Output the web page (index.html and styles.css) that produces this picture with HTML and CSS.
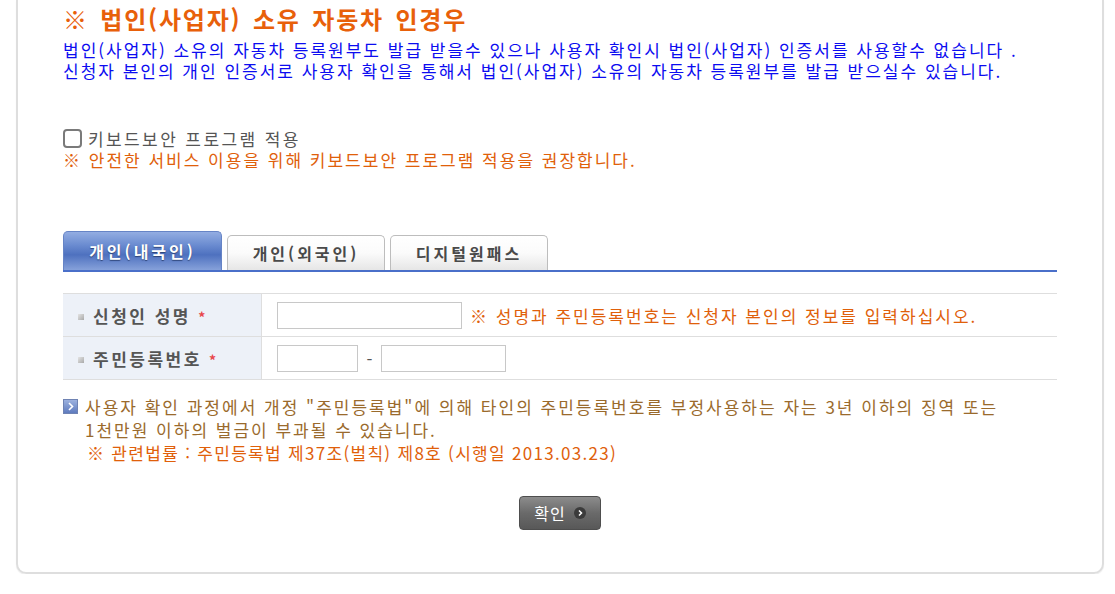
FILE: index.html
```html
<!DOCTYPE html>
<html lang="ko">
<head>
<meta charset="utf-8">
<title>법인(사업자) 소유 자동차 인경우</title>
<link rel="stylesheet" href="styles.css">
</head>
<body>
<div class="box">
  <h2 class="title">※ 법인(사업자) 소유 자동차 인경우</h2>
  <p class="desc">법인(사업자) 소유의 자동차 등록원부도 발급 받을수 있으나 사용자 확인시 법인(사업자) 인증서를 사용할수 없습니다 .<br>신청자 본인의 개인 인증서로 사용자 확인을 통해서 법인(사업자) 소유의 자동차 등록원부를 발급 받으실수 있습니다.</p>

  <div class="keysec">
    <label class="chk"><input type="checkbox" class="cbox">키보드보안 프로그램 적용</label>
    <p class="warn"><span class="mark">※</span> 안전한 서비스 이용을 위해 키보드보안 프로그램 적용을 권장합니다.</p>
  </div>

  <div class="tabs">
    <div class="tab on">개인(내국인)</div>
    <div class="tab">개인(외국인)</div>
    <div class="tab">디지털원패스</div>
  </div>

  <table class="form">
    <tr>
      <th><span class="bul"></span>신청인 성명 <span class="req">*</span></th>
      <td><input type="text" class="in name"><span class="hint"><span class="mark">※</span> 성명과 주민등록번호는 신청자 본인의 정보를 입력하십시오.</span></td>
    </tr>
    <tr>
      <th><span class="bul"></span>주민등록번호 <span class="req">*</span></th>
      <td><input type="text" class="in rrn1"><span class="dash">-</span><input type="password" class="in rrn2"></td>
    </tr>
  </table>

  <div class="notice">
    <svg class="nico" width="15" height="15" viewBox="0 0 15 15">
      <defs><linearGradient id="g1" x1="0" y1="0" x2="0" y2="1"><stop offset="0" stop-color="#9fb4e0"/><stop offset="1" stop-color="#5c79bd"/></linearGradient></defs>
      <rect x="0.5" y="0.5" width="14" height="14" fill="url(#g1)" stroke="#6f83b3"/>
      <path d="M6 4 L9.5 7.5 L6 11" fill="none" stroke="#fff" stroke-width="1.6"/>
    </svg>
    <div class="ntext">
      <p>사용자 확인 과정에서 개정 "주민등록법"에 의해 타인의 주민등록번호를 부정사용하는 자는 3년 이하의 징역 또는<br>1천만원 이하의 벌금이 부과될 수 있습니다.</p>
      <p class="law"><span class="mark">※</span> 관련법률 : 주민등록법 제37조(벌칙) 제8호 (시행일 2013.03.23)</p>
    </div>
  </div>

  <div class="btnrow">
    <button type="button" class="btn">확인<span class="arr"><svg width="12" height="12" viewBox="0 0 12 12"><circle cx="6" cy="6" r="6" fill="#3b3b3b"/><path d="M5 3.5 L7.5 6 L5 8.5" fill="none" stroke="#fff" stroke-width="1.5"/></svg></span></button>
  </div>
</div>
</body>
</html>
```

FILE: styles.css
```css
body {
  margin: 0;
  background: #fff;
  font-family: "Noto Sans CJK KR", "Noto Sans", sans-serif;
  font-size: 17px;
  letter-spacing: 2px;
  word-spacing: 0;
  color: #555;
}

.box {
  margin-left: 16px;
  width: 1088px;
  box-sizing: border-box;
  border: 2px solid #dedede;
  border-top: 0;
  border-radius: 0 0 10px 10px;
  padding: 3px 45px 42px 45px;
  box-shadow: 0 1px 1px #ececec;
}

.title {
  margin: 0;
  font-size: 24px;
  font-weight: bold;
  color: #e8600a;
  line-height: 32px;
  letter-spacing: 1.8px;
  word-spacing: 3px;
}

.desc {
  margin: 4px 0 0;
  line-height: 21px;
  color: #0c0cf0;
}

.keysec {
  margin-top: 47px;
}

.chk {
  display: flex;
  align-items: center;
  line-height: 21px;
  color: #555;
  letter-spacing: 2.4px;
}

.cbox {
  appearance: none;
  -webkit-appearance: none;
  width: 19px;
  height: 19px;
  margin: 0 6px 0 0;
  box-sizing: border-box;
  border: 2px solid #7a7a7a;
  border-radius: 4px;
  background: #fff;
}

.warn {
  margin: 0;
  line-height: 21px;
  color: #e0600a;
}

.mark {
  font-weight: bold;
  color: #e0600a;
}

.tabs {
  margin-top: 61px;
  display: flex;
  align-items: flex-end;
  gap: 5px;
  height: 39px;
  border-bottom: 2px solid #4a6fc9;
}

.tab {
  width: 158px;
  height: 35px;
  box-sizing: border-box;
  border: 1px solid #bdbdbd;
  border-bottom: 0;
  border-radius: 5px 5px 0 0;
  background: linear-gradient(#ffffff, #fbfbfb 50%, #e6e6e6);
  display: flex;
  align-items: center;
  justify-content: center;
  font-size: 16px;
  font-weight: bold;
  color: #4a4a4a;
  letter-spacing: 3px;
  word-spacing: 0;
}

.tab.on {
  width: 159px;
  height: 39px;
  border-color: #6684c6;
  background: linear-gradient(#93ade2, #6a8bd0 35%, #4e71bf 60%, #86a1da);
  color: #fff;
  text-shadow: 0 1px 1px #2c4275;
}

.form {
  width: 100%;
  margin-top: 21px;
  border-collapse: collapse;
  border-top: 1px solid #dedede;
}

.form th,
.form td {
  height: 42px;
  padding: 0;
  border-bottom: 1px solid #dedede;
}

.form th {
  width: 183px;
  padding-left: 15px;
  background: #edf1f8;
  border-right: 1px solid #dedede;
  text-align: left;
  font-weight: bold;
  color: #555;
  letter-spacing: 2.5px;
}

.form td {
  padding-left: 15px;
}

.bul {
  display: inline-block;
  width: 6px;
  height: 6px;
  margin-right: 9px;
  vertical-align: middle;
  position: relative;
  top: -1px;
  background: linear-gradient(135deg, #e4e4e4, #a9a9a9);
}

.req {
  color: #e8474c;
  font-size: 14px;
}

.in {
  box-sizing: border-box;
  height: 27px;
  border: 1px solid #c8c8c8;
  padding: 0 4px;
  vertical-align: middle;
  font: inherit;
}

.in.name { width: 185px; }
.in.rrn1 { width: 81px; }
.in.rrn2 { width: 125px; }

.hint {
  margin-left: 8px;
  color: #e0600a;
  vertical-align: middle;
}

.dash {
  display: inline-block;
  width: 23px;
  text-align: center;
  vertical-align: middle;
  color: #555;
  letter-spacing: 0;
}

.notice {
  margin-top: 15px;
  display: flex;
  gap: 7px;
  align-items: flex-start;
}

.nico {
  margin-top: 4px;
  flex: none;
}

.ntext p {
  margin: 0;
  line-height: 23px;
  color: #9a6a2c;
}

.ntext .law {
  color: #e0600a;
  padding-left: 2px;
  letter-spacing: 1.3px;
}

.btnrow {
  margin-top: 32px;
  display: flex;
  justify-content: center;
}

.btn {
  width: 82px;
  height: 34px;
  border: 1px solid #4e4e4e;
  border-radius: 4px;
  background: linear-gradient(#8c8c8c, #6a6a6a 50%, #585858);
  color: #fff;
  font: inherit;
  font-size: 16px;
  letter-spacing: 1px;
  display: flex;
  align-items: center;
  justify-content: center;
  gap: 8px;
  padding: 0;
}

.arr {
  display: flex;
}
```
